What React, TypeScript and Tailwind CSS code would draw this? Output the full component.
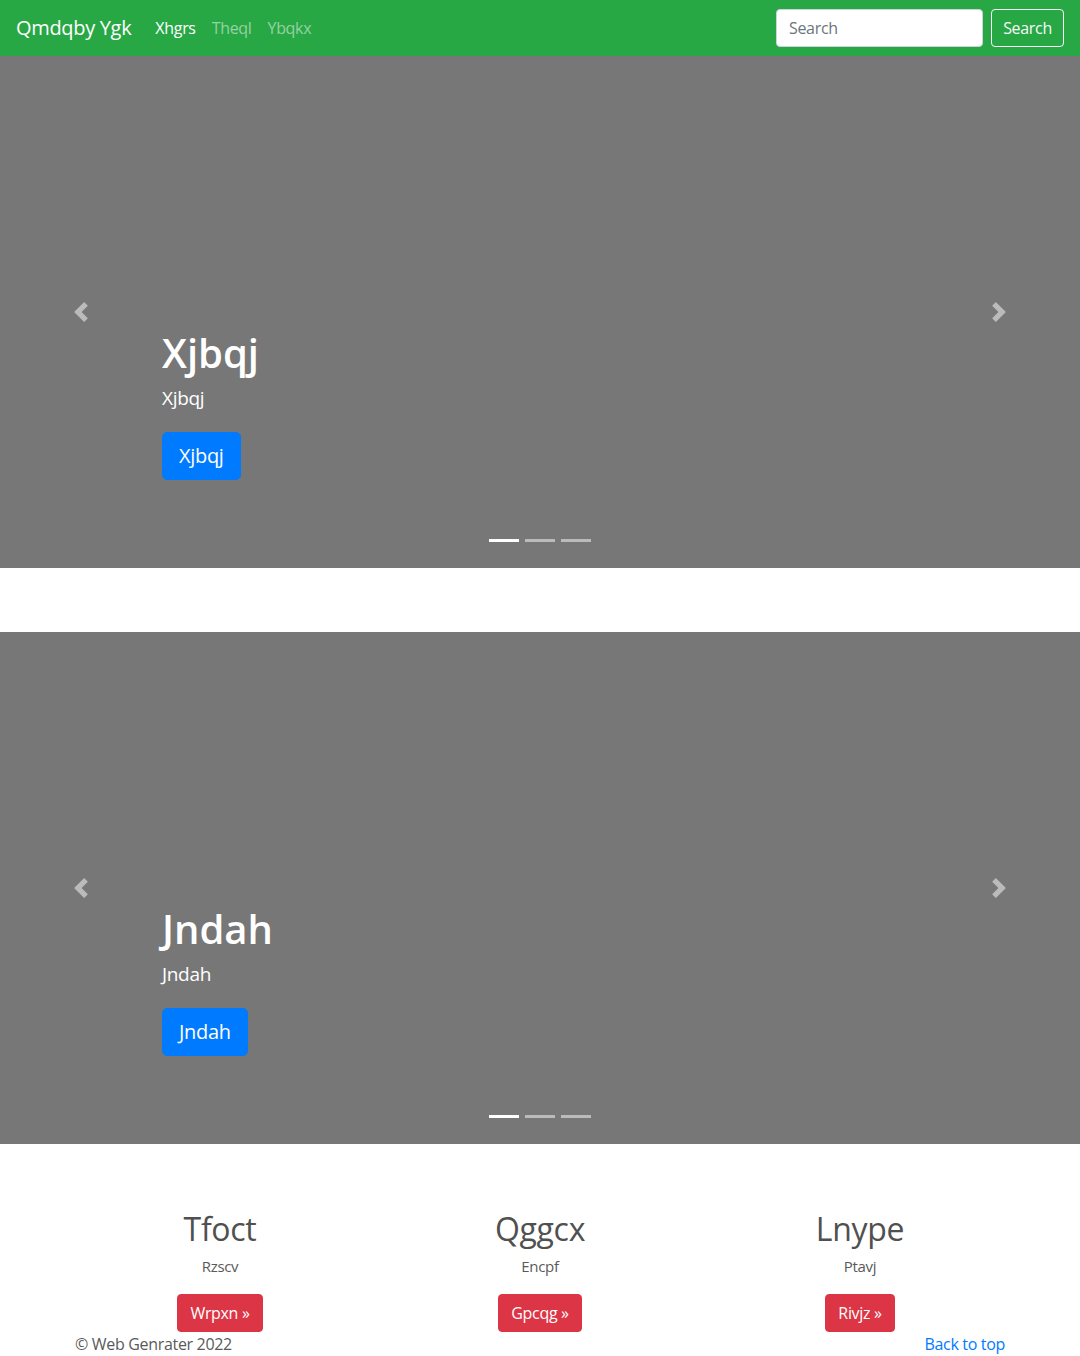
import React from "react";

const FONT = { fontFamily: '"Open Sans", "Noto Sans", "Liberation Sans", sans-serif' };

function Prev() {
  return (
    <svg width="20" height="20" viewBox="0 0 8 8" fill="#fff">
      <path d="M5.25 0l-4 4 4 4 1.5-1.5L4.25 4l2.5-2.5L5.25 0z" />
    </svg>
  );
}
function Next() {
  return (
    <svg width="20" height="20" viewBox="0 0 8 8" fill="#fff">
      <path d="M2.75 0l-1.5 1.5L3.75 4l-2.5 2.5L2.75 8l4-4-4-4z" />
    </svg>
  );
}

function Carousel({ title }: { title: string }) {
  return (
    <div className="relative h-[512px] bg-[#777777] overflow-hidden">
      <div className="absolute left-0 top-0 bottom-0 w-[15%] flex items-center justify-center opacity-50">
        <Prev />
      </div>
      <div className="absolute right-0 top-0 bottom-0 w-[15%] flex items-center justify-center opacity-50">
        <Next />
      </div>
      <div className="absolute left-[15%] right-[15%] bottom-[88px] text-white text-left">
        <h1 className="text-[40px] leading-[48px] font-semibold mb-[9px] tracking-normal">{title}</h1>
        <p className="text-[19px] leading-6 mb-[22px]">{title}</p>
        <a className="inline-block h-12 px-4 text-[20px] leading-[46px] rounded-[5px] bg-[#007bff] border border-[#007bff] text-white">
          {title}
        </a>
      </div>
      <div className="absolute bottom-0 left-0 right-0 flex justify-center mb-4">
        <span className="w-[30px] h-[3px] mx-[3px] mb-[10px] bg-white" />
        <span className="w-[30px] h-[3px] mx-[3px] mb-[10px] bg-white opacity-50" />
        <span className="w-[30px] h-[3px] mx-[3px] mb-[10px] bg-white opacity-50" />
      </div>
    </div>
  );
}

function Col({ h, p, b }: { h: string; p: string; b: string }) {
  return (
    <div className="px-[15px] text-center">
      <h2 className="text-[32px] leading-[38px] font-medium mt-[2px] mb-[6px] text-[#505050]">{h}</h2>
      <p className="text-[15px] leading-6 mb-4 mx-3">{p}</p>
      <a className="inline-block h-[38px] px-3 text-base leading-9 rounded bg-[#dc3545] border border-[#dc3545] text-white">
        {b} »
      </a>
    </div>
  );
}

export default function App() {
  return (
    <div style={FONT} className="text-[#5a5a5a] bg-white min-h-[1356px] tracking-[-0.02em]">
      <nav className="h-14 bg-[#28a745] flex items-center justify-between px-4">
        <div className="flex items-center">
          <span className="text-white text-[20px] leading-[30px] mr-4">Qmdqby Ygk</span>
          <span className="text-white text-base px-2">Xhgrs</span>
          <span className="text-white/50 text-base px-2">Theql</span>
          <span className="text-white/50 text-base px-2">Ybqkx</span>
        </div>
        <div className="flex items-center">
          <div className="w-[207px] h-[38px] bg-white border border-[#ced4da] rounded px-3 flex items-center text-base text-[#6c757d] mr-[8px]">
            Search
          </div>
          <div className="w-[73px] h-[38px] border border-[#f8f9fa] rounded flex items-center justify-center text-base text-[#f8f9fa]">
            Search
          </div>
        </div>
      </nav>
      <Carousel title="Xjbqj" />
      <div className="h-16" />
      <Carousel title="Jndah" />
      <div className="w-[960px] mx-auto mt-16">
        <div className="grid grid-cols-3">
          <Col h="Tfoct" p="Rzscv" b="Wrpxn" />
          <Col h="Qggcx" p="Encpf" b="Gpcqg" />
          <Col h="Lnype" p="Ptavj" b="Rivjz" />
        </div>
        <div className="flex justify-between px-[15px] text-base leading-6">
          <span>© Web Genrater 2022</span>
          <span className="text-[#007bff]">Back to top</span>
        </div>
      </div>
    </div>
  );
}
